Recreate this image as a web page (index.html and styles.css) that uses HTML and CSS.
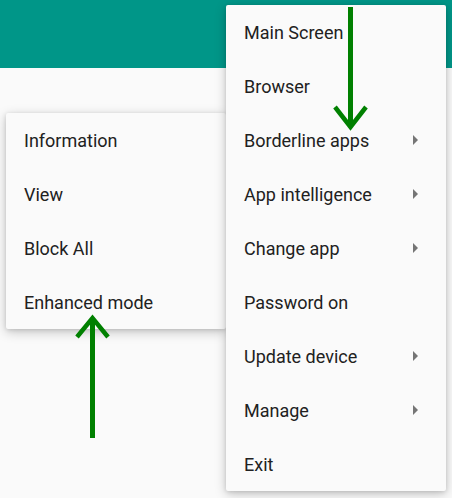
FILE: index.html
```html
<!DOCTYPE html>
<html lang="en">
<head>
  <meta charset="UTF-8">
  <title>Menu</title>
  <link rel="stylesheet" href="styles.css">
</head>
<body>
  <div class="screen">
    <div class="toolbar"></div>

    <div class="menu sub-menu">
      <div class="item">Information</div>
      <div class="item">View</div>
      <div class="item">Block All</div>
      <div class="item">Enhanced mode</div>
    </div>

    <div class="menu main-menu">
      <div class="item">Main Screen</div>
      <div class="item">Browser</div>
      <div class="item">Borderline apps <span class="caret"></span></div>
      <div class="item">App intelligence <span class="caret"></span></div>
      <div class="item">Change app <span class="caret"></span></div>
      <div class="item">Password on</div>
      <div class="item">Update device <span class="caret"></span></div>
      <div class="item">Manage <span class="caret"></span></div>
      <div class="item">Exit</div>
    </div>

    <!-- annotation arrows -->
    <svg class="arrows" width="452" height="498" viewBox="0 0 452 498">
      <g stroke="#008000" stroke-width="5" fill="none">
        <line x1="350.5" y1="7" x2="350.5" y2="126" />
        <polyline points="335,107 350.5,127 366,107" stroke-width="4.5" />
        <line x1="92.5" y1="438" x2="92.5" y2="319" />
        <polyline points="77,337 92.5,318 108,337" stroke-width="4.5" />
      </g>
    </svg>
  </div>
</body>
</html>
```

FILE: styles.css
```css
body {
  margin: 0;
  background-color: #fafafa;
  font-family: Roboto, "Noto Sans", sans-serif;
}

.screen {
  position: relative;
  width: 452px;
  height: 498px;
  overflow: hidden;
  background-color: #fafafa;
}

.toolbar {
  height: 68px;
  background-color: #009688;
}

.menu {
  position: absolute;
  width: 220px;
  background: #fafafa;
  border-radius: 2px;
  box-shadow: 0 3px 12px rgba(0,0,0,0.22), 0 1px 4px rgba(0,0,0,0.12);
}

.main-menu {
  left: 226px;
  top: 5px;
  z-index: 2;
}

.sub-menu {
  left: 6px;
  top: 113px;
  z-index: 1;
}

.item {
  height: 54px;
  display: flex;
  align-items: center;
  padding: 0 28px 0 18px;
  font-size: 18px;
  color: #212121;
}

.caret {
  margin-left: auto;
  width: 0;
  height: 0;
  border-left: 5px solid #757575;
  border-top: 5px solid transparent;
  border-bottom: 5px solid transparent;
}

.arrows {
  position: absolute;
  left: 0;
  top: 0;
  z-index: 3;
}
```
